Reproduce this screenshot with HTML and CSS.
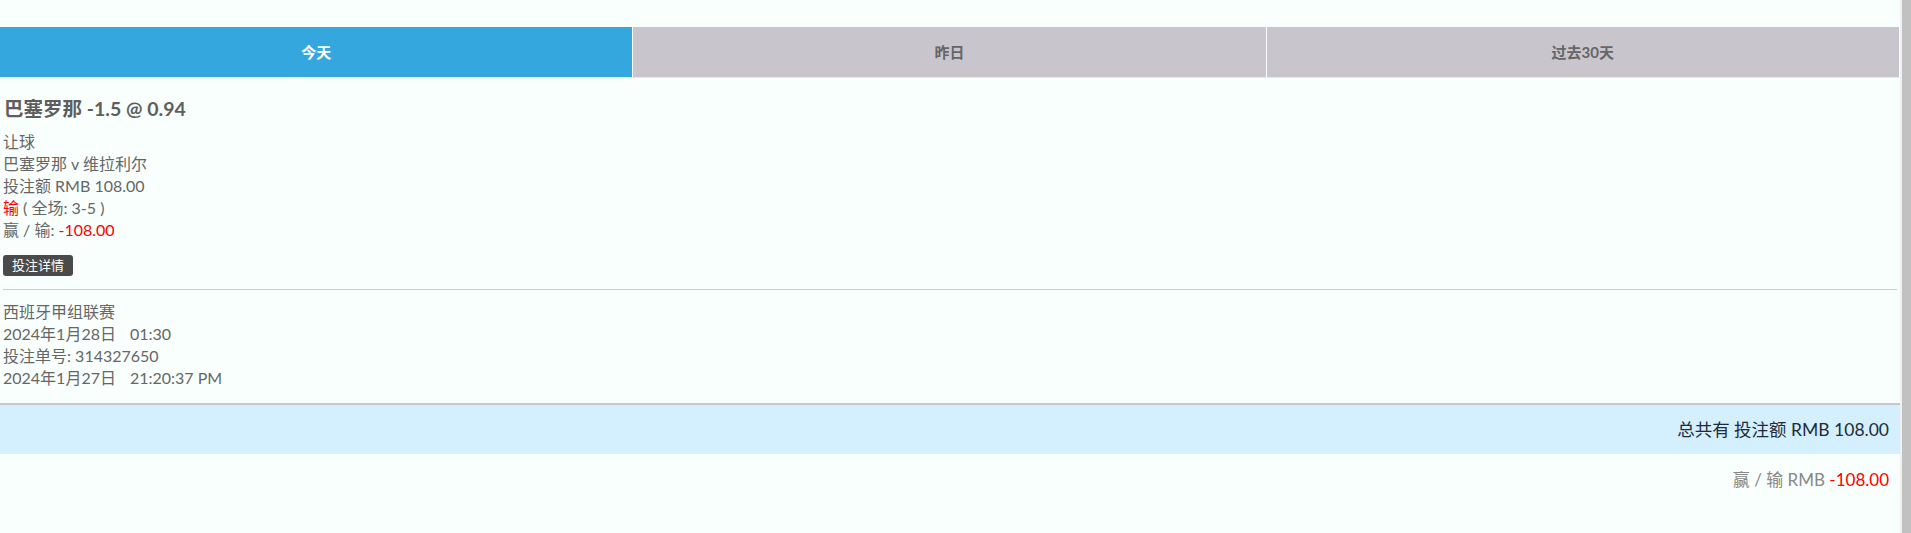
FILE: index.html
```html
<!DOCTYPE html>
<html lang="zh-CN">
<head>
	<meta charset="UTF-8">
	<title>投注记录</title>
	<link rel="stylesheet" href="styles.css">
</head>
<body>
	<div class="page">
		<div class="main">
			<ul class="tabs">
				<li class="selected">今天</li>
				<li>昨日</li>
				<li>过去30天</li>
			</ul>
			<div class="bet">
				<h2 class="bet-title">巴塞罗那 -1.5 @ 0.94</h2>
				<div class="bet-info">
					<p>让球</p>
					<p>巴塞罗那 v 维拉利尔</p>
					<p>投注额 RMB 108.00</p>
					<p><span class="red">输</span> ( 全场: 3-5 )</p>
					<p>赢 / 输: <span class="red">-108.00</span></p>
				</div>
				<a class="btn-detail">投注详情</a>
				<div class="bet-meta">
					<p>西班牙甲组联赛</p>
					<p>2024年1月28日<span class="time">01:30</span></p>
					<p>投注单号: 314327650</p>
					<p>2024年1月27日<span class="time">21:20:37 PM</span></p>
				</div>
			</div>
			<div class="total">总共有 投注额 RMB 108.00</div>
			<div class="winloss">赢 / 输 RMB <span class="red">-108.00</span></div>
		</div>
		<div class="scroll-strip"></div>
	</div>
</body>
</html>
```

FILE: styles.css
```css
*{
	margin: 0;
	padding: 0;
	box-sizing: border-box;
}
ul{
	list-style-type: none;
}
html, body{
	height: 100%;
}
body{
	background: #f9fffc;
	font-family: "Lato", "Noto Sans CJK SC", sans-serif;
	color: #666;
	overflow: hidden;
}
.page{
	display: flex;
	height: 100%;
}
.main{
	flex: 1;
	padding-top: 27px;
}
.scroll-strip{
	width: 11px;
	background: #c1c1c1;
	border-left: 2px solid #f1f1f1;
}
.tabs{
	display: flex;
	border-bottom: 1px solid #e6ebe8;
}
.tabs li{
	flex: 1;
	height: 50px;
	line-height: 50px;
	text-align: center;
	font-size: 15px;
	font-weight: bold;
	color: #666;
	background: #c8c5cc;
	border-right: 1px solid #fff;
	cursor: pointer;
}
.tabs .selected{
	background: #34a7df;
	color: #fff;
}
.bet{
	padding: 18px 3px 14px 3px;
	border-bottom: 2px solid #c8c5cc;
}
.bet-title{
	font-size: 19.5px;
	line-height: 26px;
	font-weight: bold;
	color: #5e5e5e;
	padding-left: 1px;
}
.bet-info{
	margin-top: 9px;
	font-size: 16px;
	line-height: 22px;
}
.red{
	color: #f00;
}
.btn-detail{
	display: inline-block;
	margin-top: 14px;
	height: 21px;
	line-height: 21px;
	padding: 0 9px;
	font-size: 13px;
	color: #fff;
	background: #4a4a4a;
	border-radius: 3px;
	cursor: pointer;
}
.bet-meta{
	margin-top: 13px;
	border-top: 1px solid #ccc;
	padding-top: 11px;
	font-size: 16px;
	line-height: 22px;
}
.time{
	margin-left: 14px;
}
.total{
	height: 49px;
	line-height: 49px;
	background: #d4effd;
	text-align: right;
	padding-right: 11px;
	font-size: 17.5px;
	color: #1d2b3a;
}
.winloss{
	margin-top: 14px;
	line-height: 24px;
	text-align: right;
	padding-right: 11px;
	font-size: 17px;
	color: #888;
}
```
